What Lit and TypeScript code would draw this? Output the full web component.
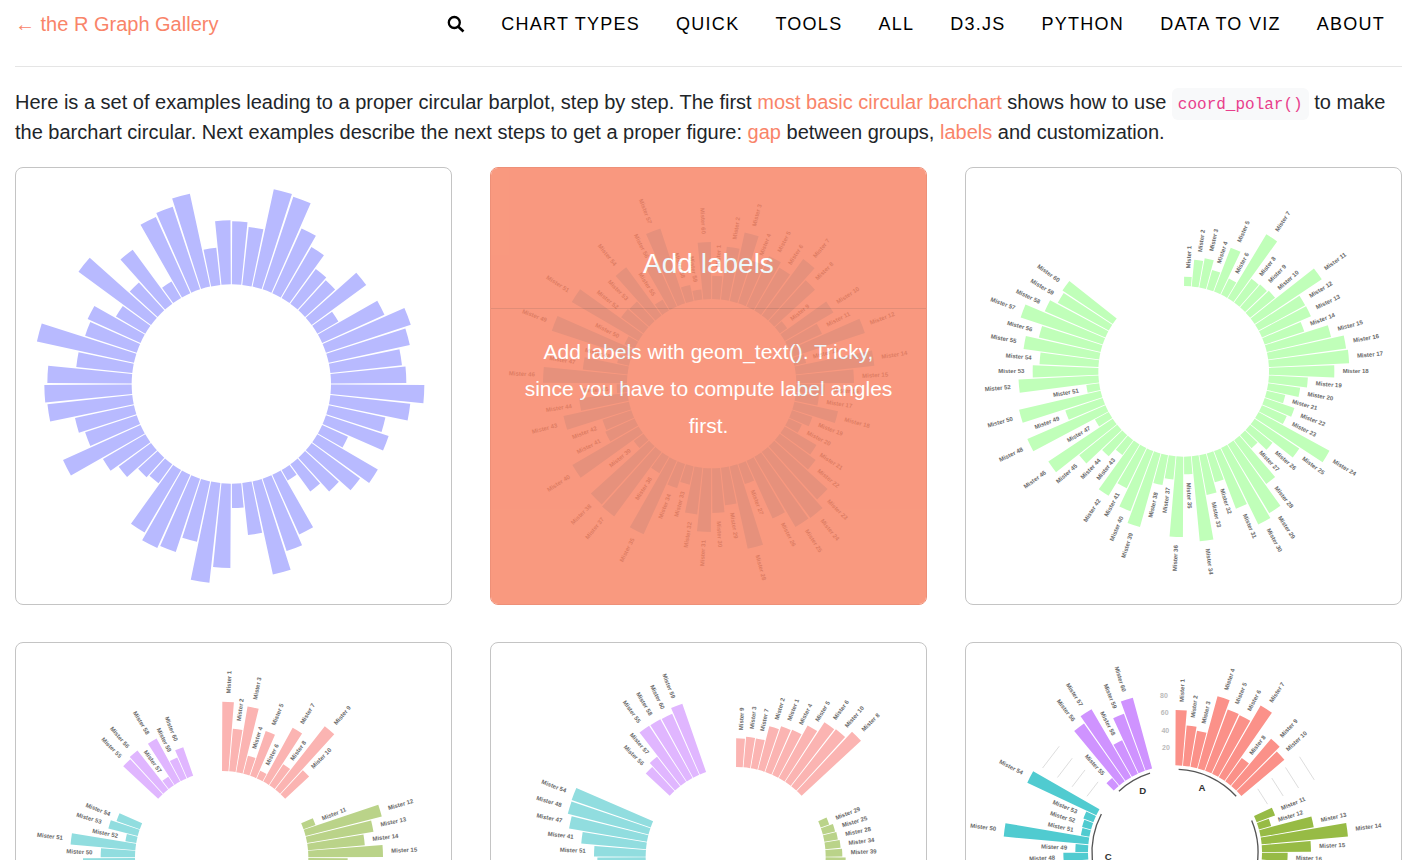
import { LitElement, html, svg, css, nothing } from "lit";
import { customElement, property } from "lit/decorators.js";

interface Group {
  name: string;
  color: string;
  radii: number[];
  ids?: number[];
}

interface Chart {
  title: string;
  cx: number;
  cy: number;
  inner: number;
  /** empty slots left after each group */
  gap: number;
  labels: boolean;
  scale?: boolean;
  groups: Group[];
  hover?: { title: string; text: string };
}

const charts: Chart[] = [
  {
    title: "Most basic circular barchart",
    cx: 649, cy: 651, inner: 299, gap: 0, labels: false,
    groups: [{
      name: "", color: "#b8baff",
      radii: [
        488, 474, 598, 592, 512, 476, 428, 421, 502, 372, 504, 567, 548, 515, 525,
        579, 540, 473, 497, 384, 509, 479, 436, 400, 335, 495, 528, 585, 456, 372,
        552, 600, 484, 531, 540, 516, 369, 378, 419, 446, 554, 462, 480, 555, 561,
        552, 468, 597, 462, 473, 401, 569, 412, 500, 356, 550, 560, 584, 411, 491,
      ],
    }],
  },
  {
    title: "Add labels",
    cx: 665, cy: 650, inner: 254, gap: 0, labels: true,
    hover: {
      title: "Add labels",
      text: "Add labels with geom_text(). Tricky, since you have to compute label angles first.",
    },
    groups: [{
      name: "", color: "#82cbe9",
      radii: [
        324, 413, 464, 388, 419, 403, 464, 419, 281, 423, 363, 484, 290, 491, 427,
        339, 324, 388, 318, 297, 364, 387, 470, 500, 498, 444, 317, 507, 367, 388,
        445, 395, 310, 330, 496, 311, 494, 490, 290, 484, 350, 345, 455, 400, 285,
        506, 389, 290, 505, 287, 486, 337, 333, 433, 292, 400, 490, 303, 284, 425,
      ],
    }],
  },
  {
    title: "Circular barchart with a break",
    cx: 656, cy: 613, inner: 256, gap: 10, labels: true,
    groups: [{
      name: "", color: "#c0ffb9",
      radii: [
        284, 336, 345, 316, 397, 310, 480, 344, 347, 352, 498, 415, 416, 381, 454,
        492, 497, 452, 373, 353, 313, 350, 337, 498, 417, 342, 308, 419, 497, 511,
        441, 346, 377, 512, 309, 497, 326, 347, 485, 449, 390, 436, 311, 340, 402,
        488, 303, 511, 374, 507, 295, 496, 453, 433, 485, 446, 515, 454, 430, 437,
      ],
    }],
  },
  {
    title: "Space between groups",
    cx: 620, cy: 647, inner: 260, gap: 4, labels: true,
    groups: [
      { name: "A", color: "#fbb4b2", radii: [468, 388, 460, 316, 402, 285, 444, 336, 501, 358] },
      {
        name: "B", color: "#bad389",
        radii: [
          298, 496, 462, 431, 484, 378, 330, 410, 452, 300, 366, 489, 402, 318, 440,
          350, 475, 391, 290, 420, 465, 340, 380, 498, 310, 430, 360, 450, 405, 325,
        ],
      },
      { name: "C", color: "#91dddf", radii: [340, 410, 480, 302, 450, 372, 330, 465, 416, 363, 455, 293, 351, 334] },
      { name: "D", color: "#e0b6ff", radii: [403, 409, 291, 407, 329, 351] },
    ],
  },
  {
    title: "Order bars",
    cx: 737, cy: 645, inner: 270, gap: 4, labels: true,
    groups: [
      {
        name: "A", color: "#fbb4b2",
        ids: [9, 3, 7, 2, 1, 4, 5, 6, 10, 8],
        radii: [356, 362, 361, 405, 415, 418, 450, 484, 487, 513],
      },
      {
        name: "B", color: "#bad389",
        ids: [
          29, 25, 28, 34, 39, 11, 17, 40, 22, 31, 36, 13, 19, 27, 30,
          12, 38, 15, 24, 33, 14, 21, 35, 16, 26, 37, 18, 32, 20, 23,
        ],
        radii: [
          297, 308, 311, 316, 320, 330, 336, 342, 349, 355, 361, 368, 374, 381, 388,
          394, 401, 408, 415, 422, 429, 436, 443, 450, 458, 466, 474, 483, 492, 502,
        ],
      },
      {
        name: "C", color: "#91dddf",
        ids: [43, 46, 52, 45, 49, 42, 53, 44, 50, 51, 41, 47, 48, 54],
        radii: [300, 312, 326, 340, 355, 370, 386, 400, 415, 425, 465, 507, 520, 521],
      },
      { name: "D", color: "#e0b6ff", ids: [56, 57, 55, 58, 60, 59], radii: [368, 382, 472, 471, 470, 487] },
    ],
  },
  {
    title: "Circular barchart customization",
    cx: 630, cy: 631, inner: 261, gap: 3, labels: true, scale: true,
    groups: [
      { name: "A", color: "#fb9189", radii: [427, 382, 371, 485, 457, 455, 510, 347, 446, 430] },
      {
        name: "B", color: "#97bb45",
        radii: [
          320, 299, 423, 521, 408, 338, 450, 312, 390, 476, 355, 430, 298, 500, 372,
          415, 330, 460, 305, 488, 346, 400, 438, 290, 470, 365, 420, 310, 455, 380,
        ],
      },
      { name: "C", color: "#50cbd0", radii: [350, 420, 300, 480, 390, 440, 310, 335, 299, 516, 287, 289, 293, 490] },
      { name: "D", color: "#cf93ff", radii: [292, 473, 497, 372, 443, 481] },
    ],
  },
];

const LABEL_OFFSET = 25;

@customElement("circular-barplot")
class CircularBarplot extends LitElement {
  @property({ attribute: false }) chart!: Chart;

  static styles = css`
    :host { display: block; }
    svg { display: block; width: 100%; height: auto; }
    .label { font: bold 18px "Liberation Sans", Arial, sans-serif; fill: #6a6a6a; }
    .label.dark { fill: #444; }
    .tick { font: bold 21px "Liberation Sans", Arial, sans-serif; fill: #bbb; }
    .group { font: bold 29px "Liberation Sans", Arial, sans-serif; fill: #333; }
    .grid { stroke: #ccc; stroke-width: 2; }
    .base { stroke: #555; stroke-width: 4; fill: none; }
  `;

  private at(r: number, deg: number): string {
    const a = (deg * Math.PI) / 180;
    const { cx, cy } = this.chart;
    return `${(cx + r * Math.sin(a)).toFixed(2)} ${(cy - r * Math.cos(a)).toFixed(2)}`;
  }

  private bar(r: number, mid: number, half: number, color: string) {
    const { inner } = this.chart;
    const d =
      `M${this.at(inner, mid - half)}L${this.at(r, mid - half)}` +
      `A${r} ${r} 0 0 1 ${this.at(r, mid + half)}L${this.at(inner, mid + half)}` +
      `A${inner} ${inner} 0 0 0 ${this.at(inner, mid - half)}Z`;
    return svg`<path d=${d} fill=${color}></path>`;
  }

  private label(id: number, r: number, mid: number) {
    const { cx, cy, hover } = this.chart;
    const left = mid > 180;
    const x = left ? cx - r - LABEL_OFFSET : cx + r + LABEL_OFFSET;
    const turn = left ? mid - 270 : mid - 90;
    return svg`<text class=${hover ? "label dark" : "label"} x=${x} y=${cy} dy="0.35em"
      text-anchor=${left ? "end" : "start"}
      transform="rotate(${turn.toFixed(2)} ${cx} ${cy})">Mister ${id}</text>`;
  }

  private decoration(from: number, to: number, slot: number, name: string) {
    const { inner, cx, cy, gap } = this.chart;
    const r = inner - 12;
    const a = from + slot / 2;
    const b = to - slot / 2;
    const mid = (((a + b) / 2) * Math.PI) / 180;
    const large = b - a > 180 ? 1 : 0;
    const rings = to + gap * slot < 359 ? [313, 366, 418, 471] : [];
    // group names lean towards the vertical axis
    const x = cx + 208 * Math.sin(mid) - 7 * Math.sign(Math.sin(mid));
    return svg`
      <path class="base" d="M${this.at(r, a)}A${r} ${r} 0 ${large} 1 ${this.at(r, b)}"></path>
      <text class="group" text-anchor="middle" dy="0.35em"
        x=${x} y=${cy - 5 - 208 * Math.cos(mid)}>${name}</text>
      ${rings.map((g) => svg`<path class="grid"
        d="M${this.at(g, to + slot / 2)}L${this.at(g, to + (gap - 0.5) * slot)}"></path>`)}`;
  }

  render() {
    const c = this.chart;
    const slots = c.groups.reduce((n, g) => n + g.radii.length + c.gap, 0);
    const slot = 360 / slots;
    const parts: unknown[] = [];
    let index = 0;
    let id = 1;
    for (const g of c.groups) {
      const from = index * slot;
      g.radii.forEach((r, i) => {
        const mid = (index + 0.5) * slot;
        parts.push(this.bar(r, mid, slot * 0.45, g.color));
        if (c.labels) parts.push(this.label(g.ids ? g.ids[i] : id, r, mid));
        index++;
        id++;
      });
      if (c.scale) parts.push(this.decoration(from, index * slot, slot, g.name));
      index += c.gap;
    }
    return html`<svg viewBox="3 3 1305 1308" role="img" aria-label=${c.title}>
      ${parts}
      ${c.scale
        ? svg`
          <text class="tick" text-anchor="middle" dy="0.35em" x="597" y="161">80</text>
          <text class="tick" text-anchor="middle" dy="0.35em" x="599" y="213">60</text>
          <text class="tick" text-anchor="middle" dy="0.35em" x="601" y="265">40</text>
          <text class="tick" text-anchor="middle" dy="0.35em" x="603" y="318">20</text>`
        : nothing}
    </svg>`;
  }
}

@customElement("app-root")
class AppRoot extends LitElement {
  static styles = css`
    :host {
      display: block;
      padding: 0 20px 38px 15px;
      background: #fff;
      color: #212529;
      font: 20px/30px "Liberation Sans", Arial, sans-serif;
    }
    a { color: #f98469; text-decoration: none; }
    .bar {
      display: flex;
      justify-content: space-between;
      align-items: flex-start;
      padding: 9px 17px 27px 0;
      border-bottom: 1px solid #e5e5e5;
    }
    .home { white-space: nowrap; }
    .menu { display: flex; align-items: center; gap: 36px; }
    .menu a {
      color: #000;
      font-size: 18px;
      letter-spacing: 0.07em;
      white-space: nowrap;
    }
    .search {
      display: flex;
      padding: 0;
      border: 0;
      background: none;
      color: #000;
      cursor: pointer;
    }
    .search svg { width: 18px; height: 18px; }
    .intro { margin: 20px 0; }
    code {
      padding: 8px 6px 6px;
      border-radius: 6px;
      background: #f8f9fa;
      color: #e83e8c;
      font: 16px "Liberation Mono", monospace;
    }
    .grid {
      display: grid;
      grid-template-columns: repeat(3, minmax(0, 1fr));
      gap: 37px 38px;
    }
    .card {
      display: block;
      position: relative;
      overflow: hidden;
      border: 1px solid #c4c4c4;
      border-radius: 8px;
    }
    .card.active { border-color: #ee9078; }
    .overlay {
      position: absolute;
      inset: 0;
      background: rgb(248, 135, 105);
      opacity: 0.85;
      color: #fff;
      text-align: center;
    }
    .overlay h2 {
      margin: 0;
      padding: 77px 20px 25px;
      border-bottom: 1px solid #dc7a60;
      font-size: 28px;
      font-weight: 400;
      line-height: 38px;
    }
    .overlay p { margin: 0; padding: 24px 28px; font-size: 21px; line-height: 37px; }
  `;

  render() {
    const menu = ["CHART TYPES", "QUICK", "TOOLS", "ALL", "D3.JS", "PYTHON", "DATA TO VIZ", "ABOUT"];
    return html`
      <header class="bar">
        <a class="home" href="#">← the R Graph Gallery</a>
        <nav class="menu">
          <button class="search" aria-label="Search">
            <svg viewBox="0 0 18 18" fill="none" stroke="currentColor" aria-hidden="true">
              <circle cx="7.300" cy="7.500" r="5.500" stroke-width="2.300"></circle>
              <path d="M11.300 11.700 16.500 16.500" stroke-width="2.600"></path>
            </svg>
          </button>
          ${menu.map((m) => html`<a href="#">${m}</a>`)}
        </nav>
      </header>
      <p class="intro">
        Here is a set of examples leading to a proper circular barplot, step by step. The first
        <a href="#">most basic circular barchart</a> shows how to use <code>coord_polar()</code> to
        make the barchart circular. Next examples describe the next steps to get a proper figure:
        <a href="#">gap</a> between groups, <a href="#">labels</a> and customization.
      </p>
      <main class="grid">
        ${charts.map((c) => html`
          <a class="card ${c.hover ? "active" : ""}" href="#">
            <circular-barplot .chart=${c}></circular-barplot>
            ${c.hover
              ? html`<div class="overlay"><h2>${c.hover.title}</h2><p>${c.hover.text}</p></div>`
              : nothing}
          </a>`)}
      </main>
    `;
  }
}
